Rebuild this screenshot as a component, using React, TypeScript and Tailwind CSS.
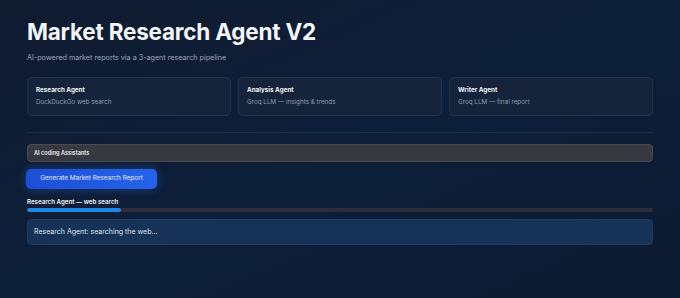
import React from 'react';

const agents = [
  { name: 'Research Agent', desc: 'DuckDuckGo web search' },
  { name: 'Analysis Agent', desc: 'Groq LLM — insights & trends' },
  { name: 'Writer Agent', desc: 'Groq LLM — final report' },
];

export default function App() {
  const progress = 15;

  return (
    <div
      className="w-[680px] h-[298px] overflow-hidden bg-gradient-to-br from-[#0f1b2f] via-[#0e1f3a] to-[#0b1a30] text-white"
      style={{ fontFamily: 'Inter, "Noto Sans", sans-serif' }}
    >
      <div className="px-[27px] pt-[18px]">
        <h1 className="text-[22.5px] leading-[28px] font-bold tracking-[-0.2px] text-[#f3f5f9]">
          Market Research Agent V2
        </h1>
        <p className="mt-[7px] text-[7.2px] leading-[10px] text-[#9aa6b8]">
          AI-powered market reports via a 3-agent research pipeline
        </p>

        <div className="mt-[14px] grid grid-cols-3 gap-[7px]">
          {agents.map((a) => (
            <div
              key={a.name}
              className="h-[39px] rounded-[5px] border border-[#24324a] bg-[#15243b] px-[8px] pt-[8px]"
            >
              <div className="text-[6.3px] leading-[9px] font-bold text-[#f1f4f8]">{a.name}</div>
              <div className="mt-[3px] text-[6.3px] leading-[9px] text-[#8f9bb0]">{a.desc}</div>
            </div>
          ))}
        </div>

        <div className="mt-[16px] h-px bg-[#1f2d45]" />

        <div className="mt-[11px] h-[18px] rounded-[4px] border border-[#4a4b52] bg-[#38393f] px-[6px] flex items-center">
          <span className="text-[5.6px] font-semibold text-[#eef0f4]">AI coding Assistants</span>
        </div>

        <button className="mt-[7px] -ml-px h-[20px] w-[131px] rounded-[5px] bg-gradient-to-r from-[#1d4ed8] to-[#2563eb] text-[6.4px] text-[#e6ecfb] shadow-[0_0_10px_rgba(37,99,235,0.45)] flex items-center justify-center">
          Generate Market Research Report
        </button>

        <div className="mt-[8px] text-[6.2px] leading-[9px] font-semibold text-[#f2f4f8]">
          Research Agent — web search
        </div>
        <div className="mt-[2px] h-[4px] rounded-full bg-[#2c2f3a] overflow-hidden">
          <div className="h-full bg-[#1e88e5] rounded-full" style={{ width: `${progress}%` }} />
        </div>

        <div className="mt-[7px] h-[26px] rounded-[4px] bg-[#163256] border border-[#1c3b63] px-[6px] flex items-center">
          <span className="text-[7px] text-[#dde6f2]">Research Agent: searching the web...</span>
        </div>
      </div>
    </div>
  );
}
